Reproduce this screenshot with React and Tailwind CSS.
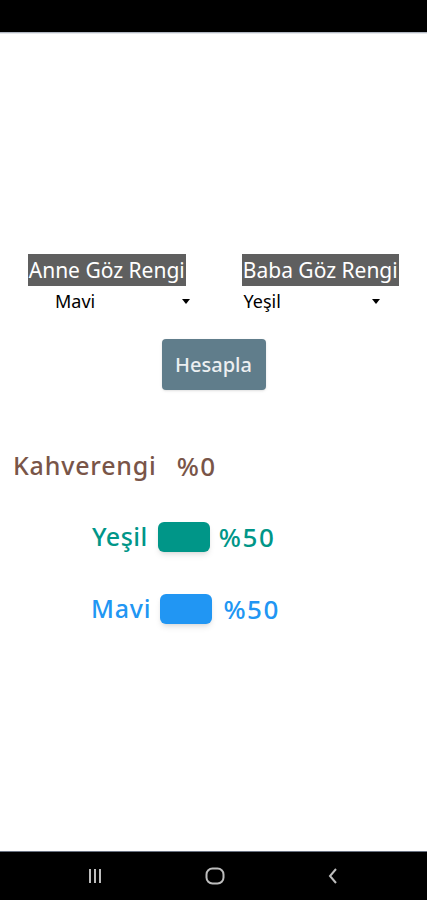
import React from 'react';

function Swatch({ color }) {
  return <div className={`w-[52px] h-[30px] rounded-md shadow-md ${color}`} />;
}

function Spinner({ value, className }) {
  return (
    <div className={`flex items-center justify-between h-[30px] ${className}`}>
      <span className="text-[18px] text-black leading-none">{value}</span>
      <span className="w-0 h-0 border-l-[4px] border-r-[4px] border-t-[5px] border-l-transparent border-r-transparent border-t-black" />
    </div>
  );
}

export default function App() {
  return (
    <div className="w-[427px] h-[900px] flex flex-col bg-white" style={{ fontFamily: '"Noto Sans", sans-serif' }}>
      {/* status bar */}
      <div className="h-[32px] bg-black shrink-0" />
      <div className="h-[2px] bg-gradient-to-b from-gray-400 to-white shrink-0" />

      <main className="flex-grow flex flex-col">
        {/* selections */}
        <div className="grid grid-cols-2 mt-[220px]">
          <div className="flex flex-col">
            <div className="self-center bg-[#5f5f5f] text-white text-[21px] leading-[32px] px-[1px]">Anne Göz Rengi</div>
            <Spinner value="Mavi" className="ml-[55px] w-[135px]" />
          </div>
          <div className="flex flex-col">
            <div className="self-center bg-[#5f5f5f] text-white text-[21px] leading-[32px] px-[1px]">Baba Göz Rengi</div>
            <Spinner value="Yeşil" className="ml-[30px] w-[136px]" />
          </div>
        </div>

        <button className="mx-auto mt-[23px] w-[104px] h-[51px] rounded bg-[#607d8b] text-[#eceff1] text-[20px] font-medium shadow-sm">
          Hesapla
        </button>

        {/* results */}
        <div className="flex items-center mt-[58px] ml-[13px] h-[36px] text-[#795548] text-[25px] font-medium">
          <span className="tracking-[0.8px]">Kahverengi</span>
          <span className="ml-[20px] text-[26px] tracking-[1.5px]">%0</span>
        </div>

        <div className="flex items-center mt-[35px] ml-[92px] h-[36px] text-[#009688] text-[25px] font-medium">
          <span className="tracking-[0.5px]">Yeşil</span>
          <div className="ml-[10px]"><Swatch color="bg-[#009688]" /></div>
          <span className="ml-[9px] text-[26px] tracking-[1.5px]">%50</span>
        </div>

        <div className="flex items-center mt-[36px] ml-[91px] h-[36px] text-[#2196f3] text-[25px] font-medium">
          <span className="tracking-[0.8px]">Mavi</span>
          <div className="ml-[9px]"><Swatch color="bg-[#2196f3]" /></div>
          <span className="ml-[11px] text-[26px] tracking-[1.5px]">%50</span>
        </div>
      </main>

      {/* navigation bar */}
      <div className="h-[1px] bg-gray-500 shrink-0" />
      <nav className="h-[48px] bg-black shrink-0 flex items-center pl-[87px] gap-[102px]">
        <svg width="16" height="16" viewBox="0 0 16 16">
          <rect x="2" y="1" width="2" height="14" fill="#bdbdbd" />
          <rect x="7" y="1" width="2" height="14" fill="#bdbdbd" />
          <rect x="12" y="1" width="2" height="14" fill="#bdbdbd" />
        </svg>
        <svg width="20" height="18" viewBox="0 0 20 18">
          <rect x="1.5" y="1.5" width="17" height="15" rx="6" fill="none" stroke="#bdbdbd" strokeWidth="2" />
        </svg>
        <svg width="12" height="18" viewBox="0 0 12 18">
          <path d="M9 2 L3 9 L9 16" fill="none" stroke="#bdbdbd" strokeWidth="2" />
        </svg>
      </nav>
    </div>
  );
}
